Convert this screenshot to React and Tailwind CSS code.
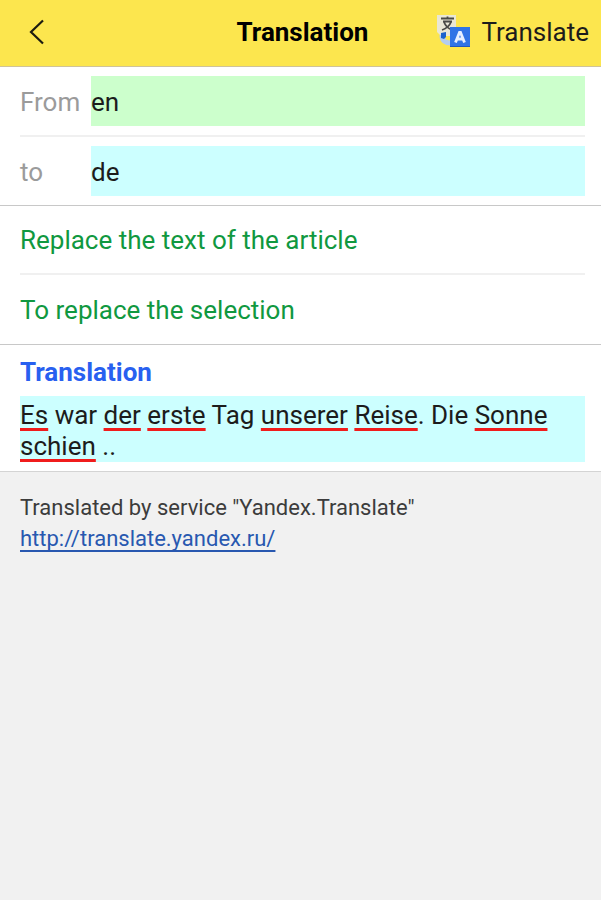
import React, { useState } from 'react';

const TranslateIcon = () => (
  <svg viewBox="0 0 34 34" className="w-[34px] h-[34px]" aria-hidden="true">
    <path d="M0 0h19v13h-6v8H4L0 17z" fill="#e9e7d6" />
    <g fill="none" stroke="#4a4a46" strokeWidth="1.800">
      <path d="M4 3.500h13M10.500 1.500v2M6 6.500h9M7 7c1.500 4 4 6.500 8 8M14 7c-1.500 4-4.500 6.500-9 8" />
    </g>
    <path d="M5 20v1c0 4 3 7 9 7" fill="none" stroke="#b4cdf0" strokeWidth="5" />
    <path d="M4 18l5-1v5l-2 2-3-1z" fill="#1c62cc" />
    <rect x="13" y="12" width="20" height="20" fill="#2f74e6" />
    <path d="M13 31.500h20" stroke="#1f58bd" strokeWidth="1" />
    <path d="M18.500 27.500l4-10h1l4 10M20 24h6" fill="none" stroke="#e6f0ff" strokeWidth="2.800" />
  </svg>
);

const LanguageRow = ({ id, label, value, onChange, color }) => (
  <div className="flex items-center">
    <label htmlFor={id} className="w-[71px] shrink-0 pt-0.5 text-[#9b9b9b]">{label}</label>
    <input
      id={id}
      type="text"
      value={value}
      onChange={(e) => onChange(e.target.value)}
      className={`h-[50px] min-w-0 flex-1 pt-0.5 outline-none ${color}`}
    />
  </div>
);

const Misspelled = ({ children }) => (
  <span className="underline decoration-[#f01c1c] decoration-[3px] underline-offset-4 [text-decoration-skip-ink:none]">
    {children}
  </span>
);

export default function App() {
  const [from, setFrom] = useState('en');
  const [to, setTo] = useState('de');

  return (
    <div className="min-h-screen bg-[#f1f1f1] font-['Roboto',sans-serif] text-[26px] leading-[31px] text-[#1c1c1c]">
      <header className="grid grid-cols-[1fr_auto_1fr] items-center h-[67px] pl-5 pr-3 pb-0.5 bg-[#fce64e] border-b border-[#cfc39a]">
        <button type="button" aria-label="Back" className="w-8 h-10 flex items-center justify-center">
          <svg viewBox="0 0 16 26" className="w-4 h-[26px]" fill="none" stroke="#1c1c10" strokeWidth="2.2">
            <path d="M15 1.500L3 13l12 11.500" />
          </svg>
        </button>
        <h1 className="pr-1 font-bold text-black">Translation</h1>
        <button type="button" className="flex items-center gap-2.5 justify-self-end">
          <TranslateIcon />
          Translate
        </button>
      </header>

      <main className="bg-white">
        <section className="pl-5 pr-4 border-b border-[#c8c8c8]">
          <div className="py-[9px] border-b-2 border-[#f0f0f0]">
            <LanguageRow id="from" label="From" value={from} onChange={setFrom} color="bg-[#ccffcc]" />
          </div>
          <div className="py-[9px]">
            <LanguageRow id="to" label="to" value={to} onChange={setTo} color="bg-[#ccffff]" />
          </div>
        </section>

        <section className="pl-5 pr-4 border-b border-[#c8c8c8] text-[#109840]">
          <button type="button" className="block w-full h-[69px] pt-0.5 text-left border-b-2 border-[#f0f0f0]">
            Replace the text of the article
          </button>
          <button type="button" className="block w-full h-[69px] pt-0.5 text-left">
            To replace the selection
          </button>
        </section>

        <section className="pl-5 pr-4 pt-3 pb-[9px] border-b border-[#d4d4d4]">
          <h2 id="result" className="mb-2 font-bold text-[#2860f0]">Translation</h2>
          <div
            role="textbox"
            aria-labelledby="result"
            aria-multiline="true"
            contentEditable
            suppressContentEditableWarning
            spellCheck={false}
            className="pt-1 bg-[#ccffff] outline-none"
          >
            <Misspelled>Es</Misspelled> war <Misspelled>der</Misspelled> <Misspelled>erste</Misspelled> Tag{' '}
            <Misspelled>unserer</Misspelled> <Misspelled>Reise</Misspelled>. Die <Misspelled>Sonne</Misspelled>{' '}
            <Misspelled>schien</Misspelled> ..
          </div>
        </section>
      </main>

      <footer className="px-5 pt-5 text-[22px] text-[#3c3c3c]">
        <p>Translated by service "Yandex.Translate"</p>
        <a
          href="http://translate.yandex.ru/"
          className="text-[#2858b0] underline decoration-2 underline-offset-4 [text-decoration-skip-ink:none]"
        >
          http://translate.yandex.ru/
        </a>
      </footer>
    </div>
  );
}
